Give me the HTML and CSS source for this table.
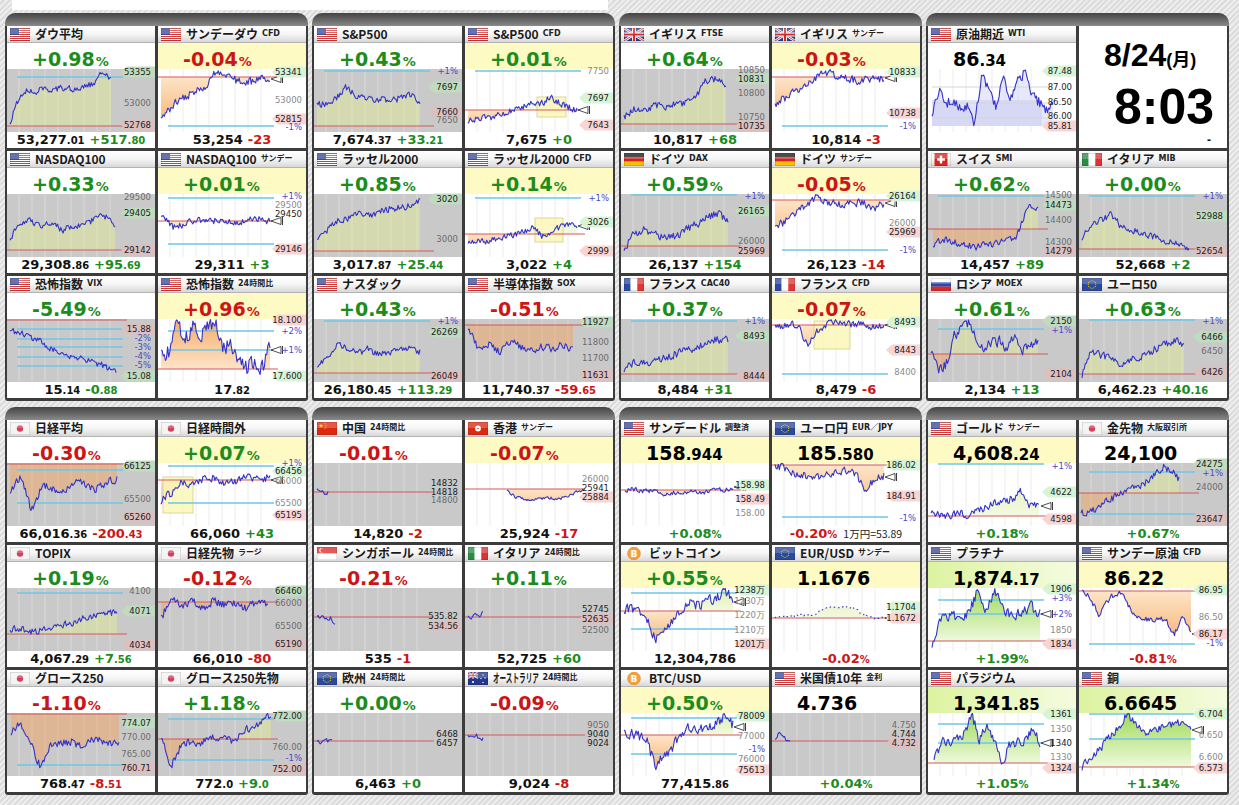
FILE: index.html
```html
<!DOCTYPE html>
<html lang="ja">
<head>
<meta charset="utf-8">
<title>マーケット一覧</title>
<link rel="stylesheet" href="styles.css">
</head>
<body>
<div class="strip"><i></i></div>
<div class="band" id="b1"></div>
<div class="band" id="b2"></div>
<script src="script.js"></script>
</body>
</html>
```

FILE: styles.css
```css
*{box-sizing:border-box}
html,body{margin:0}
body{width:1239px;height:805px;overflow:hidden;background:#e4e4e4 repeating-linear-gradient(135deg,#ededed 0 2px,#dcdcdc 2px 4px);font-family:"DejaVu Sans",sans-serif;color:#111}
.strip{height:13px;padding:0 0 3px 12px}
.strip i{display:block;width:596px;height:10px;background:#fff}
.band{display:flex;gap:4px;padding-left:5px}
.band+.band{margin-top:6px}
.grp{width:303px;padding:13px 2px 3px;display:grid;grid-template-columns:148px 148px;grid-auto-rows:122px;gap:3px;border-radius:10px 10px 3px 3px;background:linear-gradient(#444,#686868 7px,#8a8a8a 13px,#3c3c3c 13px)}
.card{background:#fff;display:flex;flex-direction:column;overflow:hidden}
.ttl{height:17px;flex:none;display:flex;align-items:center;padding-left:3px;background:linear-gradient(#fff,#f6f6f6 50%,#d8d8d8);border-bottom:1px solid #b3b3b3;white-space:nowrap}
.flag{width:20px;height:13px;flex:none;margin-right:5px;display:block}
.btc{font:700 9px "DejaVu Sans",sans-serif;fill:#fff}
.name{font:700 12px/16px "Noto Sans CJK JP",sans-serif;color:#1a1a1a}
.name.cond{display:inline-block;transform:scaleX(.55);transform-origin:0 50%;margin-right:-38px}
.sfx{font:700 8px/16px "DejaVu Sans","Noto Sans CJK JP",sans-serif;margin-left:4px;color:#222}
.top{height:26px;flex:none;padding:7px 0 0 25px;line-height:19px;white-space:nowrap}
.top.y{background:#fdfac4}
.top.g{background:linear-gradient(90deg,#dcf3a0,#eaf8c4 55%,#f5fbdf)}
.pv{font-size:19px;font-weight:700}
.pu{font-size:13px;font-weight:700;margin-left:1px}
.tp{font-size:19px;font-weight:700;color:#000}
.td{font-size:15px;font-weight:700;color:#000}
.chart{height:63px;flex:none}
.chart.gr{background:#c9c9c9}
.cs{display:block;overflow:visible}
.bot{height:16px;flex:none;text-align:center;line-height:13px;white-space:nowrap}
.bp{font-size:13px;font-weight:700}
.bd{font-size:10px;font-weight:700}
.bc{margin-left:5px}
.bq{font-size:13px;font-weight:700}
.bu{font-size:10px;font-weight:700}
.bx{font:400 10.5px "Noto Sans CJK JP",sans-serif;margin-left:6px;color:#222}
.up{color:#1c8c1c}
.dn{color:#cc1515}
.clock{display:block}
.cd{font:700 32px/32px "Liberation Sans","Noto Sans CJK JP",sans-serif;padding:13px 0 0 25px;color:#000}
.cd small{font-size:18px}
.ct{font:700 50px/50px "Liberation Sans",sans-serif;text-align:right;padding-right:13px;margin-top:6px;color:#000}
.cx{font:700 12px/12px "Liberation Sans",sans-serif;text-align:right;padding-right:16px;margin-top:2px}
.gvg{stroke:rgba(255,255,255,.3);stroke-width:1}
.gvw{stroke:#ececec;stroke-width:1}
.gh{stroke:#d6d6d6;stroke-width:1}
.cy{stroke:#6cc6e6;stroke-width:1.3}
.rb{stroke:#d45858;stroke-width:1.2}
.ln{fill:none;stroke:#3434c8;stroke-width:1.1;stroke-linejoin:round}
.ln.ds{stroke-dasharray:1.5 3}
.mk{fill:#fff;stroke:#222;stroke-width:.8}
.ph{fill:#d6f4d6}
.pl{fill:#f8d4d4}
.gr .ph{fill:#c0dcc0}
.gr .pl{fill:#dcc0c0}
.lt{font:8.5px "DejaVu Sans",sans-serif;fill:#222}
.lt.n{fill:#8a8a8a}
.gr .lt.n{fill:#6c6c6c}
.lt.b{fill:#4848c8}
```

FILE: script.js
```js
(function(){
var D=[
{f:'us',t:'ダウ平均',p:'+0.98',pr:['53,277','.01'],ch:['+517','.80'],bg:'g',L:[54,28,21,22,19,21,18,20,17,15,4,9],x1:104,nz:2.5,b:57,cy:[8],lb:[['53355',3,'h'],['53000',34,'n'],['52768',56,'l']]},
{f:'us',t:'サンデーダウ',s:'CFD',p:'-0.04',pr:['53,254'],ch:['-23'],hl:'y',L:[47,40,30,26,22,16,3,7,10,15,12,9,10],x1:112,nz:3,b:8,cy:[57],lb:[['53341',3,'h'],['53000',31,'n'],['52815',50,'l'],['-1%',58,'b']],mk:10},
{f:'us',t:'NASDAQ100',p:'+0.33',pr:['29,308','.86'],ch:['+95','.69'],bg:'g',L:[44,30,26,32,28,36,33,30,26,22,30],x1:108,nz:2.5,b:56,lb:[['29500',3,'n'],['29405',19,'h'],['29142',56,'l']]},
{f:'us',t:'NASDAQ100',s:'サンデー',p:'+0.01',pr:['29,311'],ch:['+3'],hl:'y',L:[22,34,30,26,28,25,29,27,24,28],x1:112,nz:2.5,b:27,cy:[4,50],lb:[['+1%',2,'b'],['29500',11,'n'],['29450',20,'k'],['29146',55,'l']],mk:27},
{f:'us',t:'恐怖指数',s:'VIX',inv:1,p:'-5.49',pr:['15','.14'],ch:['-0','.88'],bg:'g',nf:1,L:[11,14,18,20,30,33,36,38,42,44,48,53],x1:109,nz:2.5,b:1,cy:[10,20,28,38,47],lb:[['15.88',10,'l'],['-2%',19,'b'],['-3%',28,'b'],['-4%',37,'b'],['-5%',46,'b'],['15.08',57,'h']]},
{f:'us',t:'恐怖指数',s:'24時間比',inv:1,p:'+0.96',pr:['17','.82'],hl:'y',L:[36,32,4,22,8,18,6,4,30,24,46,50,42,48,28],x1:112,nz:6,b:50,cy:[12,31],lb:[['18.100',1,'l'],['+2%',12,'b'],['+1%',31,'b'],['17.600',57,'h']],mk:31},

{f:'us',t:'S&P500',p:'+0.43',pr:['7,674','.37'],ch:['+33','.21'],bg:'g',L:[36,34,30,18,26,28,30,31,32,28,26,33],x1:106,nz:2.5,b:57,cy:[2],lb:[['+1%',2,'b'],['7697',18,'h'],['7650',51,'n'],['7660',43,'l']]},
{f:'us',t:'S&P500',s:'CFD',p:'+0.01',pr:['7,675'],ch:['+0'],hl:'y',L:[52,50,49,47,44,40,38,32,36,28,34,38,41],x1:112,nz:2.5,b:41,cy:[2],lb:[['7750',2,'n'],['7697',29,'h'],['7643',56,'l']],mk:41,bx:[72,28,29,20]},
{f:'us',t:'ラッセル2000',p:'+0.85',pr:['3,017','.87'],ch:['+25','.44'],bg:'g',L:[44,36,27,24,20,22,18,15,14,12,8],x1:106,nz:2.5,b:57,lb:[['3020',5,'h'],['3000',45,'n']]},
{f:'us',t:'ラッセル2000',s:'CFD',p:'+0.14',pr:['3,022'],ch:['+4'],hl:'y',L:[50,48,46,44,42,38,34,44,36,30,33],x1:112,nz:2.5,b:40,cy:[4],lb:[['+1%',4,'b'],['3026',28,'h'],['2999',57,'l']],mk:32,bx:[70,24,28,24]},
{f:'us',t:'ナスダック',p:'+0.43',pr:['26,180','.45'],ch:['+113','.29'],bg:'g',L:[45,40,24,30,34,30,36,33,30,28,33],x1:106,nz:2.5,b:54,cy:[2],lb:[['+1%',2,'b'],['26269',13,'h'],['26049',57,'l']]},
{f:'us',t:'半導体指数',s:'SOX',p:'-0.51',pr:['11,740','.37'],ch:['-59','.65'],bg:'g',L:[10,30,24,34,22,28,32,28,30,26,30],x1:108,nz:3,b:6,lb:[['11927',3,'h'],['11800',23,'n'],['11700',39,'n'],['11631',56,'l']]},

{f:'uk',t:'イギリス',s:'FTSE',p:'+0.64',pr:['10,817'],ch:['+68'],bg:'g',L:[48,40,42,36,38,35,34,28,12,10,16],x1:105,nz:2.5,b:55,lb:[['10850',1,'n'],['10831',10,'h'],['10800',24,'n'],['10750',48,'n'],['10735',57,'l']]},
{f:'uk',t:'イギリス',s:'サンデー',p:'-0.03',pr:['10,814'],ch:['-3'],hl:'y',L:[36,28,22,16,6,4,8,10,12,9,10],x1:112,nz:3,b:8,cy:[57],lb:[['10833',3,'h'],['10738',44,'l'],['-1%',57,'b']],mk:9},
{f:'de',t:'ドイツ',s:'DAX',p:'+0.59',pr:['26,137'],ch:['+154'],bg:'g',L:[55,40,35,40,45,42,36,30,24,20,25],x1:107,nz:3,b:52,cy:[1],lb:[['+1%',2,'b'],['26165',17,'h'],['26000',47,'n'],['25969',57,'l']]},
{f:'de',t:'ドイツ',s:'サンデー',p:'-0.05',pr:['26,123'],ch:['-14'],hl:'y',L:[32,28,22,12,4,6,10,12,8,10,14,9],x1:112,nz:3,b:6,cy:[56],lb:[['26164',2,'h'],['26000',29,'n'],['25969',38,'l'],['-1%',56,'b']],mk:9},
{f:'fr',t:'フランス',s:'CAC40',p:'+0.37',pr:['8,484'],ch:['+31'],bg:'g',L:[50,42,45,40,38,35,32,28,24,20,22],x1:107,nz:3,b:55,cy:[2],lb:[['+1%',2,'b'],['8493',17,'h'],['8444',57,'l']]},
{f:'fr',t:'フランス',s:'CFD',p:'-0.07',pr:['8,479'],ch:['-6'],hl:'y',L:[8,6,5,26,10,4,2,6,5,8,6],x1:112,nz:2.5,b:6,cy:[55],lb:[['8493',3,'h'],['8443',31,'l'],['8400',53,'n']],bx:[42,2,36,28],mk:6},

{f:'us',t:'原油期近',s:'WTI',m:'p',pr:['86','.34'],oil:1,L:[44,22,34,30,40,36,55,5,20,38,10,30,14,2,28,33,40,38],x0:4,x1:125,nz:4,lb:[['87.48',2,'h'],['87.00',18,'k'],['86.50',33,'k'],['86.00',47,'k'],['85.81',57,'l']]},
{m:'c'},
{f:'ch',t:'スイス',s:'SMI',p:'+0.62',pr:['14,457'],ch:['+89'],bg:'g',L:[50,46,48,50,53,51,49,46,42,12,14],x0:5,x1:110,nz:2.5,b:35,cy:[2],lb:[['14500',1,'n'],['14473',11,'h'],['14400',26,'n'],['14300',48,'n'],['14279',57,'l']]},
{f:'it',t:'イタリア',s:'MIB',p:'+0.00',pr:['52,668'],ch:['+2'],bg:'g',L:[44,30,26,20,32,36,38,42,44,48,50,54],x1:110,nz:2.5,b:55,cy:[2],lb:[['+1%',2,'b'],['52988',22,'h'],['52654',57,'l']]},
{f:'ru',t:'ロシア',s:'MOEX',p:'+0.61',pr:['2,134'],ch:['+13'],bg:'g',L:[35,51,45,18,7,2,25,28,24,22,30,15,33,28,20],x1:110,nz:4,b:35,cy:[10],lb:[['2150',2,'h'],['+1%',11,'b'],['2104',55,'l']]},
{f:'eu',t:'ユーロ50',p:'+0.63',pr:['6,462','.23'],ch:['+40','.16'],bg:'g',L:[55,33,36,40,45,42,38,34,30,25,22,26],x1:105,nz:3,b:55,cy:[1],lb:[['+1%',2,'b'],['6466',18,'h'],['6450',32,'n'],['6426',53,'l']]},

{f:'jp',t:'日経平均',p:'-0.30',pr:['66,016','.36'],ch:['-200','.43'],bg:'g',L:[30,14,48,22,26,30,18,22,26,20,16],x1:110,nz:3,b:1,cy:[7,40],lb:[['66125',3,'h'],['65500',36,'n'],['65260',54,'l']]},
{f:'jp',t:'日経時間外',p:'+0.07',pr:['66,060'],ch:['+43'],hl:'y',L:[38,30,20,22,18,14,18,20,16,14,16,14],x1:112,nz:3,b:17,cy:[3,40],lb:[['+1%',0,'b'],['66456',8,'h'],['66000',18,'n'],['65500',40,'n'],['65195',52,'l']],mk:17,bx:[5,14,30,36]},
{f:'jp',t:'TOPIX',p:'+0.19',pr:['4,067','.29'],ch:['+7','.56'],bg:'g',L:[42,40,44,42,38,36,34,30,28,26,24],x1:110,nz:2.5,b:46,cy:[5],lb:[['4100',3,'n'],['4071',23,'h'],['4034',57,'l']]},
{f:'jp',t:'日経先物',s:'ラージ',p:'-0.12',pr:['66,010'],ch:['-80'],bg:'g',L:[30,10,18,14,20,12,18,16,20,14,18],x1:110,nz:3,b:14,lb:[['66460',3,'h'],['66000',15,'n'],['65500',38,'n'],['65190',56,'l']]},
{f:'jp',t:'グロース250',p:'-1.10',pr:['768','.47'],ch:['-8','.51'],bg:'g',L:[19,11,30,54,34,31,28,32,28,26,30,29],x0:4,x1:112,nz:3,b:1,cy:[52],lb:[['774.07',10,'h'],['770.00',24,'n'],['765.00',41,'n'],['760.71',55,'l']]},
{f:'jp',t:'グロース250先物',p:'+1.18',pr:['772','.0'],ch:['+9','.0'],bg:'g',L:[22,55,36,28,32,24,26,22,30,18,14,8,2],x1:113,nz:3,b:26,cy:[6,47],lb:[['772.00',3,'h'],['760.00',34,'n'],['-1%',45,'b'],['752.00',56,'l']]},

{f:'cn',t:'中国',s:'24時間比',p:'-0.01',pr:['14,820'],ch:['-2'],bg:'g',L:[26,30,28,31,29],x1:14,nz:1.5,b:29,nf:1,lb:[['14832',20,'k'],['14818',29,'k'],['14800',37,'n']]},
{f:'hk',t:'香港',s:'サンデー',p:'-0.07',pr:['25,924'],ch:['-17'],hl:'y',L:[28,34,36,37,36,35,36,34,30,27],x0:42,x1:118,nz:1,b:26,lb:[['26000',16,'n'],['25941',25,'k'],['25884',34,'l']]},
{f:'sg',t:'シンガポール',s:'24時間比',p:'-0.21',pr:['535'],ch:['-1'],bg:'g',L:[29,28,31,30,36],x0:3,x1:21,nz:1.5,b:29,nf:1,lb:[['535.82',28,'k'],['534.56',38,'l']]},
{f:'it',t:'イタリア',s:'24時間比',p:'+0.11',pr:['52,725'],ch:['+60'],bg:'g',L:[29,31,27,28,24],x0:3,x1:18,nz:1.5,b:29,nf:1,lb:[['52745',21,'k'],['52635',31,'l'],['52500',42,'n']]},
{f:'eu',t:'欧州',s:'24時間比',p:'+0.00',pr:['6,463'],ch:['+0'],bg:'g',L:[27,29,26,28,27],x0:3,x1:18,nz:1.5,b:28,nf:1,lb:[['6468',21,'k'],['6457',30,'k']]},
{f:'au',t:'オーストラリア',cn:1,s:'24時間比',p:'-0.09',pr:['9,024'],ch:['-8'],bg:'g',L:[21,24,22,25,26],x0:3,x1:18,nz:1.5,b:22,nf:1,lb:[['9050',12,'n'],['9040',21,'k'],['9024',30,'k']]},

{f:'us',t:'サンデードル',s:'調整済',m:'p',pr:['158','.944'],p:'+0.08',hl:'y',L:[27,26,28,27,31,30,29,28,29,28,27,26],x0:4,x1:112,nz:1.8,b:27,lb:[['158.98',22,'h'],['158.49',36,'l'],['158.00',50,'n']],mk:24},
{f:'eu',t:'ユーロ円',s:'EUR／JPY',m:'p',pr:['185','.580'],p:'-0.20',ex:'1万円=53.89',hl:'y',L:[1,5,10,13,12,14,12,10,8,12,30,14,13],x1:112,nz:3,b:2,cy:[54],lb:[['186.02',2,'h'],['184.91',33,'l'],['-1%',55,'b']],mk:14},
{f:'btc',t:'ビットコイン',p:'+0.55',pr:['12,304,786'],hl:'y',L:[21,20,24,30,52,44,36,26,14,18,16,12,10,2,12],x1:112,nz:4,b:23,cy:[5,41],lb:[['1238万',2,'h'],['1230万',13,'n'],['1220万',27,'n'],['1210万',42,'n'],['1201万',56,'l']],mk:14},
{f:'eu',t:'EUR/USD',s:'サンデー',m:'p',pr:['1.1676'],p:'-0.02',hl:'y',L:[29,28,28,27,27,20,19,19,20,26,30,30,31],x0:3,x1:120,nz:.8,ds:1,b:30,rbx:148,lb:[['1.1704',19,'h'],['1.1672',30,'l']],mk:30},
{f:'btc',t:'BTC/USD',p:'+0.50',pr:['77,415','.86'],hl:'y',L:[22,20,24,30,52,44,36,26,14,18,16,12,10,2,12],x1:112,nz:4,b:22,cy:[5,41],lb:[['78009',3,'h'],['77000',23,'n'],['-1%',36,'b'],['76000',46,'n'],['75613',57,'l']],mk:14},
{f:'us',t:'米国債10年',s:'金利',m:'p',pr:['4.736'],p:'+0.04',bg:'g',L:[28,20,24,26,29],x0:3,x1:18,nz:1.5,b:28,nf:1,lb:[['4.750',12,'n'],['4.744',21,'k'],['4.732',30,'l']]},

{f:'us',t:'ゴールド',s:'サンデー',m:'p',pr:['4,608','.24'],p:'+0.18',hl:'y',L:[52,51,52,51,52,48,44,40,38,36,28,42,43],x1:111,nz:3,b:53,cy:[1],lb:[['+1%',3,'b'],['4622',29,'h'],['4598',56,'l']],mk:43},
{f:'jp',t:'金先物',s:'大阪取引所',m:'p',pr:['24,100'],p:'+0.67',bg:'g',L:[50,52,44,40,34,30,26,24,18,10,4,8,16],x0:2,x1:100,nz:3,b:30,cy:[9,51],lb:[['24275',1,'h'],['+1%',10,'b'],['24000',24,'n'],['23647',56,'l']]},
{f:'us',t:'プラチナ',m:'p',pr:['1,874','.17'],p:'+1.99',hl:'g',st:1,L:[55,33,28,30,27,5,22,2,24,27,26,18,26],x0:4,x1:112,nz:4,b:53,cy:[12,26],lb:[['1906',1,'h'],['+3%',10,'b'],['+2%',26,'b'],['1850',42,'n'],['1834',56,'l']],mk:26},
{f:'us',t:'サンデー原油',s:'CFD',m:'p',pr:['86.22'],p:'-0.81',hl:'y',L:[2,10,28,14,5,6,27,30,32,31,32,47,27,46],x1:112,nz:2,b:3,cy:[56],lb:[['86.95',2,'h'],['86.50',29,'n'],['86.17',46,'l'],['-1%',55,'b']],mk:46},
{f:'us',t:'パラジウム',m:'p',pr:['1,341','.85'],p:'+1.05',hl:'g',st:1,L:[49,27,30,28,20,0,29,10,30,52,32,28,27,17,30],x0:6,x1:112,nz:4,b:50,cy:[11,30],lb:[['1361',1,'h'],['1350',16,'n'],['1340',30,'k'],['1330',44,'n'],['1324',55,'l']],mk:30},
{f:'us',t:'銅',m:'p',pr:['6.6645'],p:'+1.34',hl:'g',st:1,L:[54,44,36,24,14,2,12,22,16,14,12,9,17],x1:112,nz:3,b:54,cy:[1,26],lb:[['6.704',1,'h'],['6.650',22,'n'],['6.600',44,'n'],['6.573',55,'l']],mk:17}
];

function rng(a){return function(){a|=0;a=a+0x6D2B79F5|0;var t=Math.imul(a^a>>>15,1|a);t=t+Math.imul(t^t>>>7,61|t)^t;return((t^t>>>14)>>>0)/4294967296;};}
function star(cx,cy,r){var p=[];for(var k=0;k<10;k++){var a=-Math.PI/2+k*Math.PI/5,rr=k%2?r*0.4:r;p.push((cx+rr*Math.cos(a)).toFixed(2)+','+(cy+rr*Math.sin(a)).toFixed(2));}return p.join(' ');}
var UKX='<path d="M0 0L20 13M20 0L0 13" stroke="#fff" stroke-width="2.6"/><path d="M0 0L20 13M20 0L0 13" stroke="#d42a2a" stroke-width=".9"/><path d="M10 0V13M0 6.5H20" stroke="#fff" stroke-width="4"/><path d="M10 0V13M0 6.5H20" stroke="#d42a2a" stroke-width="2.2"/>';

function flag(f){
  var s='',k;
  if(f==='btc') return '<svg class="flag" viewBox="0 0 20 13"><circle cx="10" cy="6.5" r="6.4" fill="#f3a03c"/><circle cx="10" cy="6.5" r="6.4" fill="none" stroke="#e08a20" stroke-width=".6"/><text x="10" y="9.8" text-anchor="middle" class="btc">B</text></svg>';
  switch(f){
    case 'us': s='<rect width="20" height="13" fill="#fff"/>';for(k=0;k<13;k+=2)s+='<rect y="'+k+'" width="20" height="1" fill="#cf3b3b"/>';s+='<rect width="9" height="7" fill="#3d4b95"/>';break;
    case 'uk': s='<rect width="20" height="13" fill="#2a3e8c"/>'+UKX;break;
    case 'de': s='<rect width="20" height="4.4" fill="#1a1a1a"/><rect y="4.3" width="20" height="4.4" fill="#d82020"/><rect y="8.6" width="20" height="4.4" fill="#f2c200"/>';break;
    case 'fr': s='<rect width="6.7" height="13" fill="#2c4ba0"/><rect x="6.6" width="6.8" height="13" fill="#fff"/><rect x="13.3" width="6.7" height="13" fill="#e03636"/>';break;
    case 'it': s='<rect width="6.7" height="13" fill="#2a8c44"/><rect x="6.6" width="6.8" height="13" fill="#fff"/><rect x="13.3" width="6.7" height="13" fill="#d83434"/>';break;
    case 'ru': s='<rect width="20" height="4.4" fill="#fff"/><rect y="4.3" width="20" height="4.4" fill="#2a48b0"/><rect y="8.6" width="20" height="4.4" fill="#d82828"/>';break;
    case 'ch': s='<rect x="3.5" width="13" height="13" fill="#d8261e"/><rect x="8.8" y="2.6" width="2.4" height="7.8" fill="#fff"/><rect x="6.1" y="5.3" width="7.8" height="2.4" fill="#fff"/>';break;
    case 'eu': s='<rect width="20" height="13" fill="#2b4a9c"/>';for(k=0;k<12;k++){var a=k*Math.PI/6;s+='<circle cx="'+(10+3.8*Math.cos(a)).toFixed(2)+'" cy="'+(6.5+3.8*Math.sin(a)).toFixed(2)+'" r=".55" fill="#f5d000"/>';}break;
    case 'jp': s='<rect width="20" height="13" fill="#f3f3f3"/><circle cx="10" cy="6.5" r="3.2" fill="#d3405c"/>';break;
    case 'cn': s='<rect width="20" height="13" fill="#de2910"/><polygon points="'+star(4,3.8,2.4)+'" fill="#ffde00"/><circle cx="8" cy="1.6" r=".5" fill="#ffde00"/><circle cx="9" cy="3.2" r=".5" fill="#ffde00"/><circle cx="9" cy="5" r=".5" fill="#ffde00"/><circle cx="8" cy="6.5" r=".5" fill="#ffde00"/>';break;
    case 'hk': s='<rect width="20" height="13" fill="#de2910"/><circle cx="10" cy="6.5" r="2.9" fill="#fff"/><circle cx="10" cy="6.5" r=".8" fill="#de2910"/>';break;
    case 'sg': s='<rect width="20" height="6.5" fill="#e02a2a"/><rect y="6.5" width="20" height="6.5" fill="#fff"/><circle cx="4.5" cy="3.3" r="2.2" fill="#fff"/><circle cx="5.4" cy="3.3" r="2" fill="#e02a2a"/>';break;
    case 'au': s='<rect width="20" height="13" fill="#22378a"/><g transform="scale(.5)">'+UKX+'</g><circle cx="5" cy="10" r="1.1" fill="#fff"/><circle cx="15" cy="3" r=".7" fill="#fff"/><circle cx="13" cy="6.5" r=".7" fill="#fff"/><circle cx="17" cy="6" r=".7" fill="#fff"/><circle cx="15" cy="10.5" r=".7" fill="#fff"/>';break;
  }
  return '<svg class="flag" viewBox="0 0 20 13">'+s+'<rect width="20" height="6" fill="#fff" opacity=".22"/><rect x=".25" y=".25" width="19.5" height="12.5" fill="none" stroke="#000" stroke-opacity=".22" stroke-width=".5"/></svg>';
}

function chart(c,i){
  var gray=c.bg==='g',R=rng(i*977+31),defs='',s='',x,j;
  for(x=12;x<=115;x+=13) s+='<line x1="'+x+'" y1="0" x2="'+x+'" y2="63" class="'+(gray?'gvg':'gvw')+'"/>';
  var x0=c.x0!=null?c.x0:3,x1=c.x1!=null?c.x1:110,L=c.L;
  var n=Math.max(8,Math.round((x1-x0)/1.1)),pts=[],z=0,amp=(c.nz||2)*2.6;
  for(j=0;j<=n;j++){
    var t=j/n,pos=t*(L.length-1),k=Math.floor(pos);if(k>L.length-2)k=L.length-2;
    var f=pos-k;z=0.2*z+(R()-0.5)*amp;
    var y=L[k]*(1-f)+L[k+1]*f+z;y=Math.max(0.5,Math.min(62.5,y));
    pts.push((x0+t*(x1-x0)).toFixed(1)+','+y.toFixed(1));
  }
  var P=pts.join(' ');
  if(c.oil){
    s+='<rect x="4" y="31" width="110" height="26" fill="#e0e2f8"/>';
    s+='<polygon points="'+x0+',57 '+P+' '+x1+',57" fill="#c9cdf4" opacity=".45"/>';
    [18,34,49].forEach(function(y){s+='<line x1="4" y1="'+y+'" x2="120" y2="'+y+'" class="gh"/>';});
  }
  var b=c.b;
  if(b!=null&&!c.nf){
    var uc,dc,G1=c.st?['#eef9dc','#9fda58']:['#f4f9e2','#dcefa8'],O1=['#fde4c8','#f5ac66'];
    if(gray){uc='rgba(232,240,140,.42)';dc='rgba(246,160,88,.45)';if(c.inv){var tt=uc;uc=dc;dc=tt;}}
    else{
      var ug=c.inv?O1:G1,dg=c.inv?G1:O1;
      defs+='<linearGradient id="gu'+i+'" gradientUnits="userSpaceOnUse" x1="0" y1="'+b+'" x2="0" y2="0"><stop offset="0" stop-color="'+ug[0]+'"/><stop offset="1" stop-color="'+ug[1]+'"/></linearGradient>';
      defs+='<linearGradient id="gd'+i+'" gradientUnits="userSpaceOnUse" x1="0" y1="'+b+'" x2="0" y2="63"><stop offset="0" stop-color="'+dg[0]+'"/><stop offset="1" stop-color="'+dg[1]+'"/></linearGradient>';
      uc='url(#gu'+i+')';dc='url(#gd'+i+')';
    }
    defs+='<clipPath id="cu'+i+'"><rect x="0" y="0" width="148" height="'+b+'"/></clipPath><clipPath id="cd'+i+'"><rect x="0" y="'+b+'" width="148" height="'+(63-b)+'"/></clipPath>';
    var poly=x0+','+b+' '+P+' '+x1+','+b;
    s+='<polygon points="'+poly+'" fill="'+uc+'" clip-path="url(#cu'+i+')"/><polygon points="'+poly+'" fill="'+dc+'" clip-path="url(#cd'+i+')"/>';
  }
  if(c.bx){s+='<rect x="'+c.bx[0]+'" y="'+c.bx[1]+'" width="'+c.bx[2]+'" height="'+c.bx[3]+'" fill="#fbf5b0" fill-opacity=".75" stroke="#d6cc8a" stroke-width=".8"/>';}
  (c.cy||[]).forEach(function(y){s+='<line x1="10" y1="'+y+'" x2="116" y2="'+y+'" class="cy"/>';});
  if(b!=null) s+='<line x1="0" y1="'+b+'" x2="'+(c.rbx||120)+'" y2="'+b+'" class="rb"/>';
  s+='<polyline points="'+P+'" class="ln'+(c.ds?' ds':'')+'"/>';
  if(c.mk!=null){var m=c.mk;s+='<polygon points="113,'+m+' 123,'+(m-3.5)+' 123,'+(m+3.5)+'" class="mk"/><line x1="124.5" y1="'+(m-4)+'" x2="124.5" y2="'+(m+4)+'" stroke="#222" stroke-width=".9"/>';}
  (c.lb||[]).forEach(function(l){var y=l[1];if(l[2]==='h'||l[2]==='l') s+='<polygon points="114,'+y+' 120,'+(y-5.5)+' 148,'+(y-5.5)+' 148,'+(y+5.5)+' 120,'+(y+5.5)+'" class="p'+l[2]+'"/>';});
  (c.lb||[]).forEach(function(l){s+='<text x="144" y="'+(l[1]+3.1).toFixed(1)+'" text-anchor="end" class="lt '+l[2]+'">'+l[0]+'</text>';});
  return '<svg class="cs" width="148" height="63" viewBox="0 0 148 63">'+(defs?'<defs>'+defs+'</defs>':'')+s+'</svg>';
}

function col(v,inv){var neg=v.charAt(0)==='-';return (neg!==!!inv)?'dn':'up';}

function card(c,i){
  if(c.m==='c') return '<div class="card clock"><div class="cd">8/24<small>(月)</small></div><div class="ct">8:03</div><div class="cx">-</div></div>';
  var h='<div class="card"><div class="ttl">'+flag(c.f)+'<span class="name'+(c.cn?' cond':'')+'">'+c.t+'</span>'+(c.s?'<span class="sfx">'+c.s+'</span>':'')+'</div>';
  var pc=c.p?col(c.p,c.inv):'';
  if(c.m==='p'){
    h+='<div class="top '+(c.hl||'')+'"><span class="tp">'+c.pr[0]+'</span>'+(c.pr[1]?'<span class="td">'+c.pr[1]+'</span>':'')+'</div>';
  }else{
    h+='<div class="top '+(c.hl||'')+'"><span class="pv '+pc+'">'+c.p+'</span><span class="pu '+pc+'">%</span></div>';
  }
  h+='<div class="chart'+(c.bg==='g'?' gr':'')+'">'+chart(c,i)+'</div><div class="bot">';
  if(c.m==='p'){
    if(c.p) h+='<span class="bq '+pc+'">'+c.p+'</span><span class="bu '+pc+'">%</span>';
    if(c.ex) h+='<span class="bx">'+c.ex+'</span>';
  }else{
    h+='<span class="bp">'+c.pr[0]+'</span>'+(c.pr[1]?'<span class="bd">'+c.pr[1]+'</span>':'');
    if(c.ch){var cc=col(c.ch[0],c.inv);h+='<span class="bp bc '+cc+'">'+c.ch[0]+'</span>'+(c.ch[1]?'<span class="bd '+cc+'">'+c.ch[1]+'</span>':'');}
  }
  return h+'</div></div>';
}

var bands=[document.getElementById('b1'),document.getElementById('b2')];
for(var g=0;g<8;g++){
  var el=document.createElement('div');el.className='grp';var h='';
  for(var r=0;r<6;r++){var i=g*6+r;h+=card(D[i],i);}
  el.innerHTML=h;bands[g<4?0:1].appendChild(el);
}
})();
```
